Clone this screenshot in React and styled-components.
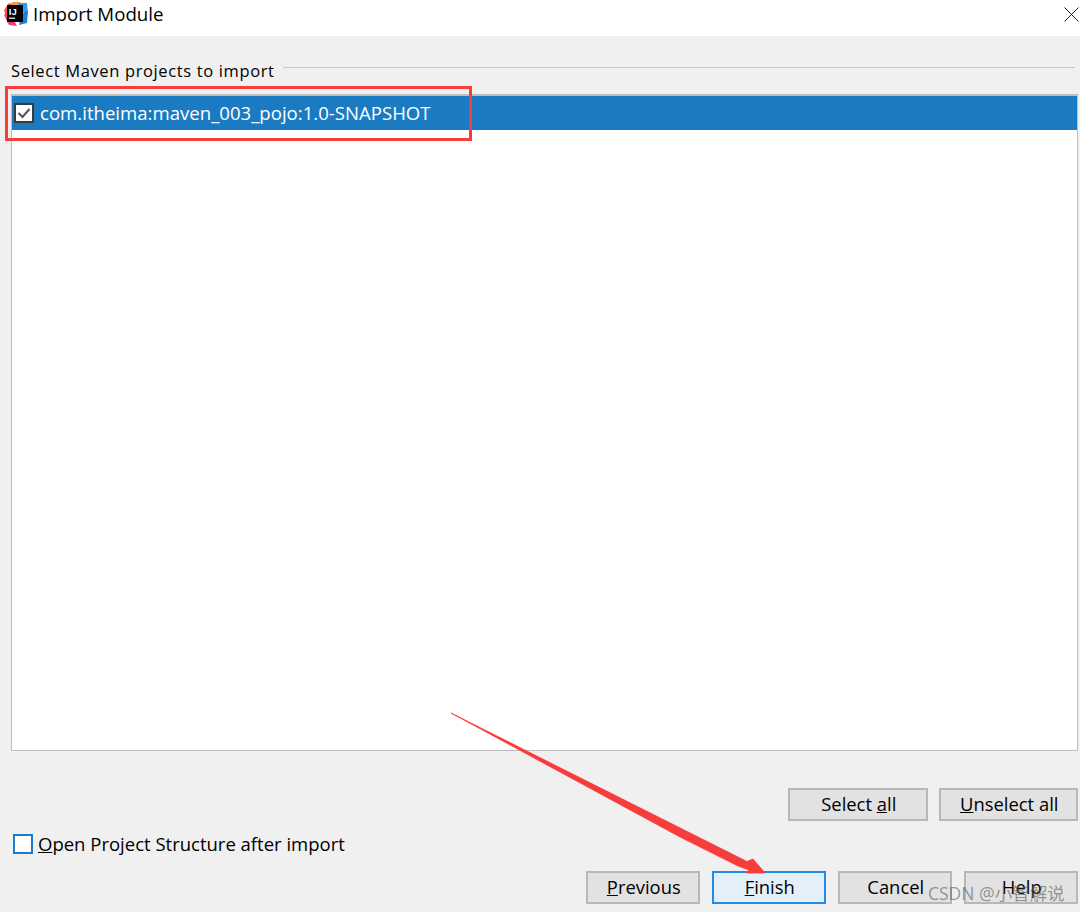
import React from 'react';
import styled, { createGlobalStyle } from 'styled-components';

const GlobalStyle = createGlobalStyle`
  html, body { margin: 0; padding: 0; background: #f0f0f0; }
  body { font-family: "Open Sans", "Noto Sans", "Liberation Sans", sans-serif; color: #000; }
`;

function App() {
  return (
    <Dialog>
      <GlobalStyle />
      <TitleBar>
        <Logo viewBox="0 0 24 24">
          <path d="M0 8 L5 1 L13 3 L3 19 Z" fill="#fb5a55" />
          <path d="M0 13 L5 23 L13 24 L5 8 Z" fill="#f5387e" />
          <path d="M8 0 L17 0 L16 5 L8 5 Z" fill="#fd9a45" />
          <path d="M14 1 L23 1 L24 13 L16 9 Z" fill="#2f9cf0" />
          <path d="M17 13 L24 8 L23 21 L15 23 Z" fill="#1e7fe0" />
          <rect x="3" y="3" width="16" height="17" fill="#000" />
          <rect x="5" y="15.6" width="6" height="1.2" fill="#fff" />
          <text x="4.8" y="13" fill="#fff" fontSize="9.5" fontWeight="700" fontFamily="Liberation Sans, sans-serif">IJ</text>
        </Logo>
        <Title>Import Module</Title>
        <CloseIcon viewBox="0 0 16 16">
          <path d="M0.5 0.5 L15.5 15.5 M15.5 0.5 L0.5 15.5" stroke="#111" strokeWidth="1" fill="none" />
        </CloseIcon>
      </TitleBar>

      <Body>
        <GroupHeader>
          <GroupLabel>Select Maven projects to import</GroupLabel>
          <GroupRule />
        </GroupHeader>

        <ProjectList>
          <ProjectRow>
            <RowCheck viewBox="0 0 20 20">
              <rect x="1" y="1" width="18" height="18" fill="#fff" stroke="#3a3a3a" strokeWidth="2" />
              <path d="M4.5 10 L8.5 14 L15.5 6" stroke="#555" strokeWidth="2.1" fill="none" />
            </RowCheck>
            <RowText>com.itheima:maven_003_pojo:1.0-SNAPSHOT</RowText>
          </ProjectRow>
        </ProjectList>

        <SelectActions>
          <Button $wide>Select <u>a</u>ll</Button>
          <Button $wide><u>U</u>nselect all</Button>
        </SelectActions>

        <OptionRow>
          <OptionBox />
          <OptionLabel><u>O</u>pen Project Structure after import</OptionLabel>
        </OptionRow>

        <Footer>
          <Button><u>P</u>revious</Button>
          <Button $primary><u>F</u>inish</Button>
          <Button>Cancel</Button>
          <Button>Help</Button>
        </Footer>
      </Body>

      <RedBox />
      <Arrow viewBox="0 0 1080 912">
        <path d="M451 713 L747 861.5 L753 859 L765 873 L746 873 L749 870 L738 866 L680 837 Z" fill="#f73c3c" stroke="#f73c3c" strokeWidth="0.8" />
      </Arrow>
      <Watermark>CSDN @小智解说</Watermark>
    </Dialog>
  );
}

const Dialog = styled.div`
  position: relative;
  width: 1080px;
  height: 912px;
  overflow: hidden;
  background: #f0f0f0;
`;

const TitleBar = styled.div`
  display: flex;
  align-items: center;
  height: 36px;
  padding: 0 0 8px 4px;
  box-sizing: border-box;
  background: #fff;
`;

const Logo = styled.svg`
  width: 24px;
  height: 24px;
  margin-right: 5px;
`;

const Title = styled.div`
  flex: 1;
  font-size: 18.7px;
  line-height: 24px;
`;

const CloseIcon = styled.svg`
  width: 15px;
  height: 15px;
  margin-right: 1px;
`;

const Body = styled.div`
  display: flex;
  flex-direction: column;
  padding: 0 2px 0 11px;
`;

const GroupHeader = styled.div`
  display: flex;
  align-items: center;
  gap: 8px;
  height: 24px;
  margin-top: 23px;
`;

const GroupLabel = styled.div`
  font-size: 16.5px;
  letter-spacing: 0.63px;
  line-height: 24px;
`;

const GroupRule = styled.div`
  flex: 1;
  height: 1px;
  margin: 0 3px 8px 0;
  background: #c8c8c8;
`;

const ProjectList = styled.div`
  height: 654px;
  margin-top: 11px;
  background: #fff;
  border: 1px solid #bebebe;
  border-top-width: 2px;
`;

const ProjectRow = styled.div`
  display: flex;
  align-items: center;
  height: 34px;
  padding-left: 2px;
  background: #1a7bc3;
`;

const RowCheck = styled.svg`
  width: 20px;
  height: 20px;
  margin-right: 6px;
`;

const RowText = styled.div`
  font-size: 18.6px;
  line-height: 24px;
  color: #fff;
`;

const SelectActions = styled.div`
  display: flex;
  justify-content: flex-end;
  gap: 11px;
  margin-top: 37px;
`;

const Button = styled.div`
  display: flex;
  align-items: center;
  justify-content: center;
  box-sizing: border-box;
  width: ${props => props.$wide ? '139.5px' : '114.5px'};
  height: 33px;
  padding: 0 0 2px 2px;
  font-size: 18.4px;
  background: ${props => props.$primary ? '#e3f0fa' : '#e2e2e2'};
  border: ${props => props.$primary ? '2px solid #1f8ceb' : '2px solid #b8b8b8'};
  white-space: pre;
`;

const OptionRow = styled.div`
  display: flex;
  align-items: center;
  height: 24px;
  margin-top: 11px;
  padding-left: 2px;
`;

const OptionBox = styled.div`
  box-sizing: border-box;
  width: 20px;
  height: 20px;
  margin-right: 5px;
  background: #fff;
  border: 2px solid #1a7bd0;
`;

const OptionLabel = styled.div`
  font-size: 18.5px;
  line-height: 24px;
`;

const Footer = styled.div`
  display: flex;
  justify-content: flex-end;
  gap: 11.5px;
  margin-top: 15px;
`;

const RedBox = styled.div`
  position: absolute;
  left: 5px;
  top: 86px;
  box-sizing: border-box;
  width: 467px;
  height: 55px;
  border: 3px solid #f73c3c;
`;

const Arrow = styled.svg`
  position: absolute;
  left: 0;
  top: 0;
  width: 1080px;
  height: 912px;
  pointer-events: none;
`;

const Watermark = styled.div`
  position: absolute;
  left: 928px;
  top: 882px;
  font-size: 17.5px;
  line-height: 22px;
  color: rgba(90, 90, 90, 0.6);
  font-family: "Open Sans", "Noto Sans CJK SC", sans-serif;
  white-space: nowrap;
`;

export default App;
